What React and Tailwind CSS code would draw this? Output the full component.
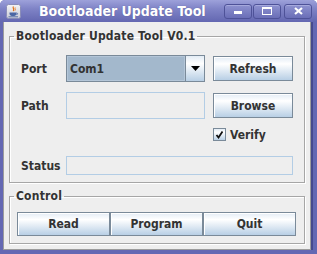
const F = "font-['DejaVu_Sans_Condensed','DejaVu_Sans',sans-serif] font-stretch-condensed font-bold";

function MetalButton({ children, className = "" }) {
  return (
    <div
      className={`flex items-center justify-center border border-[#7a8a99] bg-[linear-gradient(to_bottom,#e3ecf5_0%,#ffffff_30%,#b8cfe5_100%)] shadow-[inset_1px_1px_0_#ffffff] text-[12px] leading-none text-[#333333] ${className}`}
    >
      {children}
    </div>
  );
}

function TitleButton({ children }) {
  return (
    <div className="w-[28px] h-[15px] rounded-[3px] border border-[#4e5298] bg-[linear-gradient(to_bottom,#8e92d0,#6a6eb7)] shadow-[inset_0_1px_0_#a5a8dc] flex items-center justify-center">
      {children}
    </div>
  );
}

function JavaIcon() {
  return (
    <svg width="15" height="15" viewBox="0 0 15 15">
      <defs>
        <linearGradient id="jg" x1="0" y1="0" x2="0" y2="1">
          <stop offset="0" stopColor="#f4f4f6" />
          <stop offset="1" stopColor="#c9cbd6" />
        </linearGradient>
      </defs>
      <rect x="0.5" y="0.5" width="14" height="14" rx="2" fill="url(#jg)" stroke="#8a8db8" />
      <path d="M7.5 2.5 C6 4 9 5 7.2 7" stroke="#e2731b" strokeWidth="1.2" fill="none" />
      <path d="M9.2 3.5 C8.4 4.6 10 5.3 9 6.6" stroke="#e2731b" strokeWidth="0.9" fill="none" />
      <path d="M3.5 8.5 h7 v1.2 c0 1.6 -1.6 2.3 -3.5 2.3 s-3.5 -0.7 -3.5 -2.3z" fill="#4b67a4" />
      <path d="M10.5 9 c1.5 0 1.5 1.6 0 1.6" stroke="#4b67a4" strokeWidth="0.9" fill="none" />
      <path d="M2.5 12.8 h9.5" stroke="#4b67a4" strokeWidth="0.9" />
    </svg>
  );
}

export default function App() {
  return (
    <div className={`w-[317px] h-[254px] bg-[#6468b3] rounded-t-[5px] flex flex-col overflow-hidden ${F}`}>
      {/* Title bar */}
      <div className="h-[22px] shrink-0 flex items-center bg-[linear-gradient(to_bottom,#9da1da_0%,#7f83c6_40%,#6367b1_100%)]">
        <div className="ml-[6px] w-[15px] h-[15px] mt-[1px]">
          <JavaIcon />
        </div>
        <div className="ml-[18px] text-[14px] leading-none text-white [text-shadow:0_0_1px_rgba(40,40,90,0.4)]">
          Bootloader Update Tool
        </div>
        <div className="ml-auto mr-[5px] flex items-center">
          <TitleButton>
            <div className="w-[8px] h-[3px] bg-white mt-[3px]" />
          </TitleButton>
          <div className="ml-[1px]">
            <TitleButton>
              <div className="w-[10px] h-[8px] border border-white border-t-[2px]" />
            </TitleButton>
          </div>
          <div className="ml-[3px]">
            <TitleButton>
              <svg width="9" height="8" viewBox="0 0 9 8">
                <path d="M1 1 L8 7 M8 1 L1 7" stroke="#ffffff" strokeWidth="2.2" />
              </svg>
            </TitleButton>
          </div>
        </div>
      </div>

      {/* Body row with frame */}
      <div className="flex-1 flex pb-[4px]">
        <div className="ml-[3px] w-[308px] bg-[#eeeeee] border border-t-0 border-[#9c9c9c] shadow-[2px_0_0_#464a8e] px-[5px] pt-[7px] flex flex-col">
          {/* Group 1 */}
          <fieldset className="border border-[#a6a6a6] shadow-[inset_1px_1px_0_#ffffff,1px_1px_0_#ffffff] pl-0 pr-0 pt-[12px] pb-[7px]">
            <legend className="ml-[4px] px-[2px] text-[12px] leading-[14px] tracking-[0.2px] text-[#333333]">
              Bootloader Update Tool V0.1
            </legend>
            <div className="pl-[11px] flex flex-col text-[12px] text-[#333333]">
              {/* Port row */}
              <div className="flex items-center h-[27px]">
                <div className="w-[45px] leading-none">Port</div>
                <div className="w-[139px] h-[27px] border border-[#7a8a99] flex">
                  <div className="flex-1 bg-[#a3b8cc] shadow-[inset_0_0_0_1px_#b4c6d8] flex items-center pl-[3px] leading-none">
                    Com1
                  </div>
                  <div className="w-[19px] border-l border-[#7a8a99] bg-[linear-gradient(to_bottom,#e3ecf5_0%,#ffffff_30%,#b8cfe5_100%)] flex items-center justify-center">
                    <svg width="9" height="5" viewBox="0 0 9 5">
                      <path d="M0 0 H9 L4.5 5 Z" fill="#000000" />
                    </svg>
                  </div>
                </div>
                <MetalButton className="ml-[8px] w-[80px] h-[25px]">Refresh</MetalButton>
              </div>
              {/* Path row */}
              <div className="flex items-center h-[27px] mt-[10px]">
                <div className="w-[45px] leading-none">Path</div>
                <div className="w-[139px] h-[27px] border border-[#b3cde5] bg-[#eeeeee]" />
                <MetalButton className="ml-[8px] w-[80px] h-[25px]">Browse</MetalButton>
              </div>
              {/* Verify row */}
              <div className="flex items-center h-[15px] mt-[8px] pl-[192px]">
                <div className="w-[13px] h-[13px] border border-[#7a8a99] bg-[linear-gradient(to_bottom,#e3ecf5_0%,#ffffff_30%,#b8cfe5_100%)] flex items-center justify-center">
                  <svg width="9" height="9" viewBox="0 0 9 9">
                    <path d="M1.5 5 L3.5 7.5 L7.5 1.5" stroke="#111111" strokeWidth="1.8" fill="none" />
                  </svg>
                </div>
                <div className="ml-[4px] leading-none">Verify</div>
              </div>
              {/* Status row */}
              <div className="flex items-center h-[19px] mt-[14px]">
                <div className="w-[45px] leading-none">Status</div>
                <div className="w-[227px] h-[19px] border border-[#b3cde5] bg-[#eeeeee]" />
              </div>
            </div>
          </fieldset>

          {/* Group 2 */}
          <fieldset className="mt-[6px] border border-[#a6a6a6] shadow-[inset_1px_1px_0_#ffffff,1px_1px_0_#ffffff] pl-0 pr-0 pt-[9px] pb-[7px]">
            <legend className="ml-[4px] px-[2px] text-[12px] leading-[14px] tracking-[0.2px] text-[#333333]">
              Control
            </legend>
            <div className="pl-[7px] flex">
              <MetalButton className="w-[93px] h-[24px]">Read</MetalButton>
              <MetalButton className="w-[93px] h-[24px]">Program</MetalButton>
              <MetalButton className="w-[93px] h-[24px]">Quit</MetalButton>
            </div>
          </fieldset>
        </div>
      </div>
    </div>
  );
}
